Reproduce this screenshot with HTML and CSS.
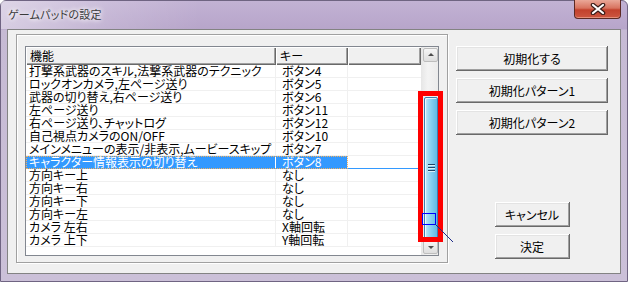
FILE: index.html
```html
<!DOCTYPE html>
<html lang="ja">
<head>
    <meta charset="UTF-8">
    <title>ゲームパッドの設定</title>
    <link rel="stylesheet" href="styles.css">
</head>
<body>
    <div class="window">
        <div class="titlebar">
            <span class="title">ゲームパッドの設定</span>
            <div class="close">
                <svg width="16" height="12" viewBox="0 0 16 12">
                    <path d="M3 2 L13 10 M13 2 L3 10" stroke="#3b1c18" stroke-width="4.5" stroke-linecap="round"/>
                    <path d="M3 2 L13 10 M13 2 L3 10" stroke="#ffffff" stroke-width="2.2" stroke-linecap="round"/>
                </svg>
            </div>
        </div>

        <div class="client">
            <div class="group">
                <div class="listview">
                    <div class="lv-main">
                        <div class="lv-header">
                            <div class="hcell c1">機能</div>
                            <div class="hcell c2">キー</div>
                            <div class="hcell c3"></div>
                        </div>
                        <div class="row"><div class="cell c1">打撃系武器のスキル,法撃系武器のテクニック</div><div class="cell c2">ボタン4</div><div class="cell c3"></div></div>
                        <div class="row"><div class="cell c1">ロックオンカメラ,左ページ送り</div><div class="cell c2">ボタン5</div><div class="cell c3"></div></div>
                        <div class="row"><div class="cell c1">武器の切り替え,右ページ送り</div><div class="cell c2">ボタン6</div><div class="cell c3"></div></div>
                        <div class="row"><div class="cell c1">左ページ送り</div><div class="cell c2">ボタン11</div><div class="cell c3"></div></div>
                        <div class="row"><div class="cell c1">右ページ送り、チャットログ</div><div class="cell c2">ボタン12</div><div class="cell c3"></div></div>
                        <div class="row"><div class="cell c1">自己視点カメラのON/OFF</div><div class="cell c2">ボタン10</div><div class="cell c3"></div></div>
                        <div class="row"><div class="cell c1">メインメニューの表示/非表示,ムービースキップ</div><div class="cell c2">ボタン7</div><div class="cell c3"></div></div>
                        <div class="row selected"><div class="cell c1">キャラクター情報表示の切り替え</div><div class="cell c2">ボタン8</div><div class="cell c3"></div></div>
                        <div class="row"><div class="cell c1">方向キー上</div><div class="cell c2">なし</div><div class="cell c3"></div></div>
                        <div class="row"><div class="cell c1">方向キー右</div><div class="cell c2">なし</div><div class="cell c3"></div></div>
                        <div class="row"><div class="cell c1">方向キー下</div><div class="cell c2">なし</div><div class="cell c3"></div></div>
                        <div class="row"><div class="cell c1">方向キー左</div><div class="cell c2">なし</div><div class="cell c3"></div></div>
                        <div class="row"><div class="cell c1">カメラ 左右</div><div class="cell c2">X軸回転</div><div class="cell c3"></div></div>
                        <div class="row"><div class="cell c1">カメラ 上下</div><div class="cell c2">Y軸回転</div><div class="cell c3"></div></div>
                    </div>
                    <div class="scrollbar">
                        <div class="arrow up"><span class="tri"></span></div>
                        <div class="thumb">
                            <div class="grip"></div>
                            <div class="grip"></div>
                            <div class="grip"></div>
                        </div>
                        <div class="arrow down"><span class="tri"></span></div>
                    </div>
                </div>

                <!-- annotation marks drawn over the scrollbar -->
                <div class="mark-red"></div>
                <div class="mark-blue"></div>
                <svg class="mark-line" width="30" height="30" viewBox="0 0 30 30">
                    <line x1="5" y1="4" x2="23" y2="22" stroke="#1c2a8a" stroke-width="1"/>
                </svg>
            </div>

            <div class="side">
                <div class="btn-stack">
                    <button class="btn wide">初期化する</button>
                    <button class="btn wide">初期化パターン1</button>
                    <button class="btn wide">初期化パターン2</button>
                </div>
                <div class="btn-stack bottom">
                    <button class="btn small">キャンセル</button>
                    <button class="btn small">決定</button>
                </div>
            </div>
        </div>
    </div>
</body>
</html>
```

FILE: styles.css
```css
body {
    margin: 0;
    font-family: "Noto Sans CJK JP", "Noto Sans", sans-serif;
    font-size: 12px;
    font-feature-settings: "palt";
    color: #000;
}

.window {
    width: 628px;
    height: 282px;
    box-sizing: border-box;
    display: flex;
    flex-direction: column;
    border: 1px solid #6f6482;
    border-radius: 6px 6px 0 0;
    background: linear-gradient(to bottom, #c2b2d4 0px, #b7a5ca 28px, #c6bad4 29px, #cbc0d8 100%);
}

.titlebar {
    height: 28px;
    display: flex;
    justify-content: space-between;
    align-items: flex-start;
    padding: 0 6px 0 7px;
    background: linear-gradient(to right, rgba(255, 255, 255, 0.45) 0px, rgba(255, 255, 255, 0.15) 110px, rgba(255, 255, 255, 0) 200px);
}

.title {
    margin-top: 6px;
    font-size: 11px;
    line-height: 14px;
    letter-spacing: 0.2px;
    color: #3a3a3a;
    text-shadow: 0 0 4px #fff, 0 0 6px #fff;
}

.close {
    width: 47px;
    height: 19px;
    box-sizing: border-box;
    margin-top: -1px;
    border: 1px solid #5c2a24;
    border-top: none;
    border-radius: 0 0 4px 4px;
    background: linear-gradient(to bottom, #eaa898 0%, #d8735f 45%, #c2412c 55%, #cc5640 100%);
    box-shadow: inset 0 -1px rgba(255, 200, 180, 0.5);
    display: flex;
    align-items: center;
    justify-content: center;
}

.client {
    flex: 1;
    margin: 0 6px 7px 6px;
    border: 1px solid #838383;
    background: #f0f0f0;
    display: flex;
    align-items: flex-start;
}

.group {
    position: relative;
    width: 432px;
    height: 229px;
    box-sizing: border-box;
    margin: 4px 0 0 8px;
    border: 1px solid #a0a0a0;
    box-shadow: inset 1px 1px #fff, 1px 1px #fff;
}

.listview {
    width: 414px;
    height: 210px;
    box-sizing: border-box;
    margin: 11px 0 0 8px;
    border: 1px solid #828790;
    background: #fff;
    display: flex;
}

.lv-main {
    width: 395px;
}

.lv-header {
    height: 18px;
    display: flex;
}

.hcell {
    box-sizing: border-box;
    height: 18px;
    padding-left: 4px;
    line-height: 17px;
    background: #f0f0f0;
    box-shadow: inset 1px 1px #fff, inset -1px -1px #696969, inset -2px -2px #a0a0a0;
}

.c1 { width: 250px; }
.c2 { width: 72px; }
.c3 { width: 73px; }

.row {
    position: relative;
    display: flex;
    height: 13px;
    box-sizing: border-box;
    border-bottom: 1px solid #f0f0f0;
}

.cell {
    box-sizing: border-box;
    height: 12px;
    line-height: 12px;
    white-space: nowrap;
    border-right: 1px solid #f0f0f0;
}

.cell.c1 { padding-left: 3px; }
.cell.c2 { padding-left: 6px; }
.cell.c3 { border-right: none; }

.row.selected {
    border-bottom-color: #3399ff;
}

.row.selected .c1,
.row.selected .c2 {
    height: 13px;
    background: #3399ff;
    color: #fff;
}

.row.selected .c1 {
    border-right-color: #fff;
}

.row.selected::after {
    content: "";
    position: absolute;
    left: 0;
    top: 0;
    width: 322px;
    height: 13px;
    box-sizing: border-box;
    border: 1px dotted #f0b060;
}

.scrollbar {
    width: 17px;
    display: flex;
    flex-direction: column;
    align-items: flex-end;
    background: linear-gradient(to right, #e6e6e6, #f3f3f3 40%, #ebebeb);
}

.arrow {
    width: 15px;
    height: 14px;
    box-sizing: border-box;
    margin: 1px 0;
    border: 1px solid #bdbdbd;
    border-radius: 2px;
    background: linear-gradient(to bottom, #f6f6f6, #dedede);
    display: flex;
    align-items: center;
    justify-content: center;
}

.tri {
    width: 0;
    height: 0;
    border-left: 3px solid transparent;
    border-right: 3px solid transparent;
}

.up .tri { border-bottom: 3px solid #4d4d4d; }
.down .tri { border-top: 3px solid #4d4d4d; }

.thumb {
    width: 14px;
    height: 143px;
    box-sizing: border-box;
    margin-top: 34px;
    border: 1px solid #3c7eb0;
    border-radius: 2px;
    background: linear-gradient(to right, #c4ebfa 0%, #9ad8f4 30%, #7fcbef 60%, #62b9e6 100%);
    box-shadow: inset 1px 1px rgba(255, 255, 255, 0.75);
    display: flex;
    flex-direction: column;
    align-items: center;
    justify-content: center;
    gap: 2px;
}

.grip {
    width: 7px;
    height: 1px;
    background: #1f4366;
    box-shadow: 0 1px #d8f2fc;
}

.mark-red {
    position: absolute;
    left: 401px;
    top: 56px;
    width: 25px;
    height: 151px;
    box-sizing: border-box;
    border: 5px solid #ff0000;
}

.mark-blue {
    position: absolute;
    left: 405px;
    top: 178px;
    width: 14px;
    height: 12px;
    box-sizing: border-box;
    border: 1px solid #0000ff;
}

.mark-line {
    position: absolute;
    left: 413px;
    top: 185px;
}

.side {
    width: 152px;
    margin: 16px 0 0 8px;
    display: flex;
    flex-direction: column;
    align-items: center;
}

.btn-stack {
    display: flex;
    flex-direction: column;
    gap: 7px;
}

.btn-stack.bottom {
    margin-top: 67px;
}

.btn {
    height: 25px;
    padding: 0;
    border: none;
    background: #f0f0f0;
    font-family: inherit;
    font-size: 12px;
    font-feature-settings: "palt";
    color: #000;
    box-shadow: inset -1px -1px #696969, inset 1px 1px #fff, inset -2px -2px #a0a0a0, inset 2px 2px #e3e3e3;
}

.btn.wide { width: 152px; }
.btn.small { width: 75px; }
```
